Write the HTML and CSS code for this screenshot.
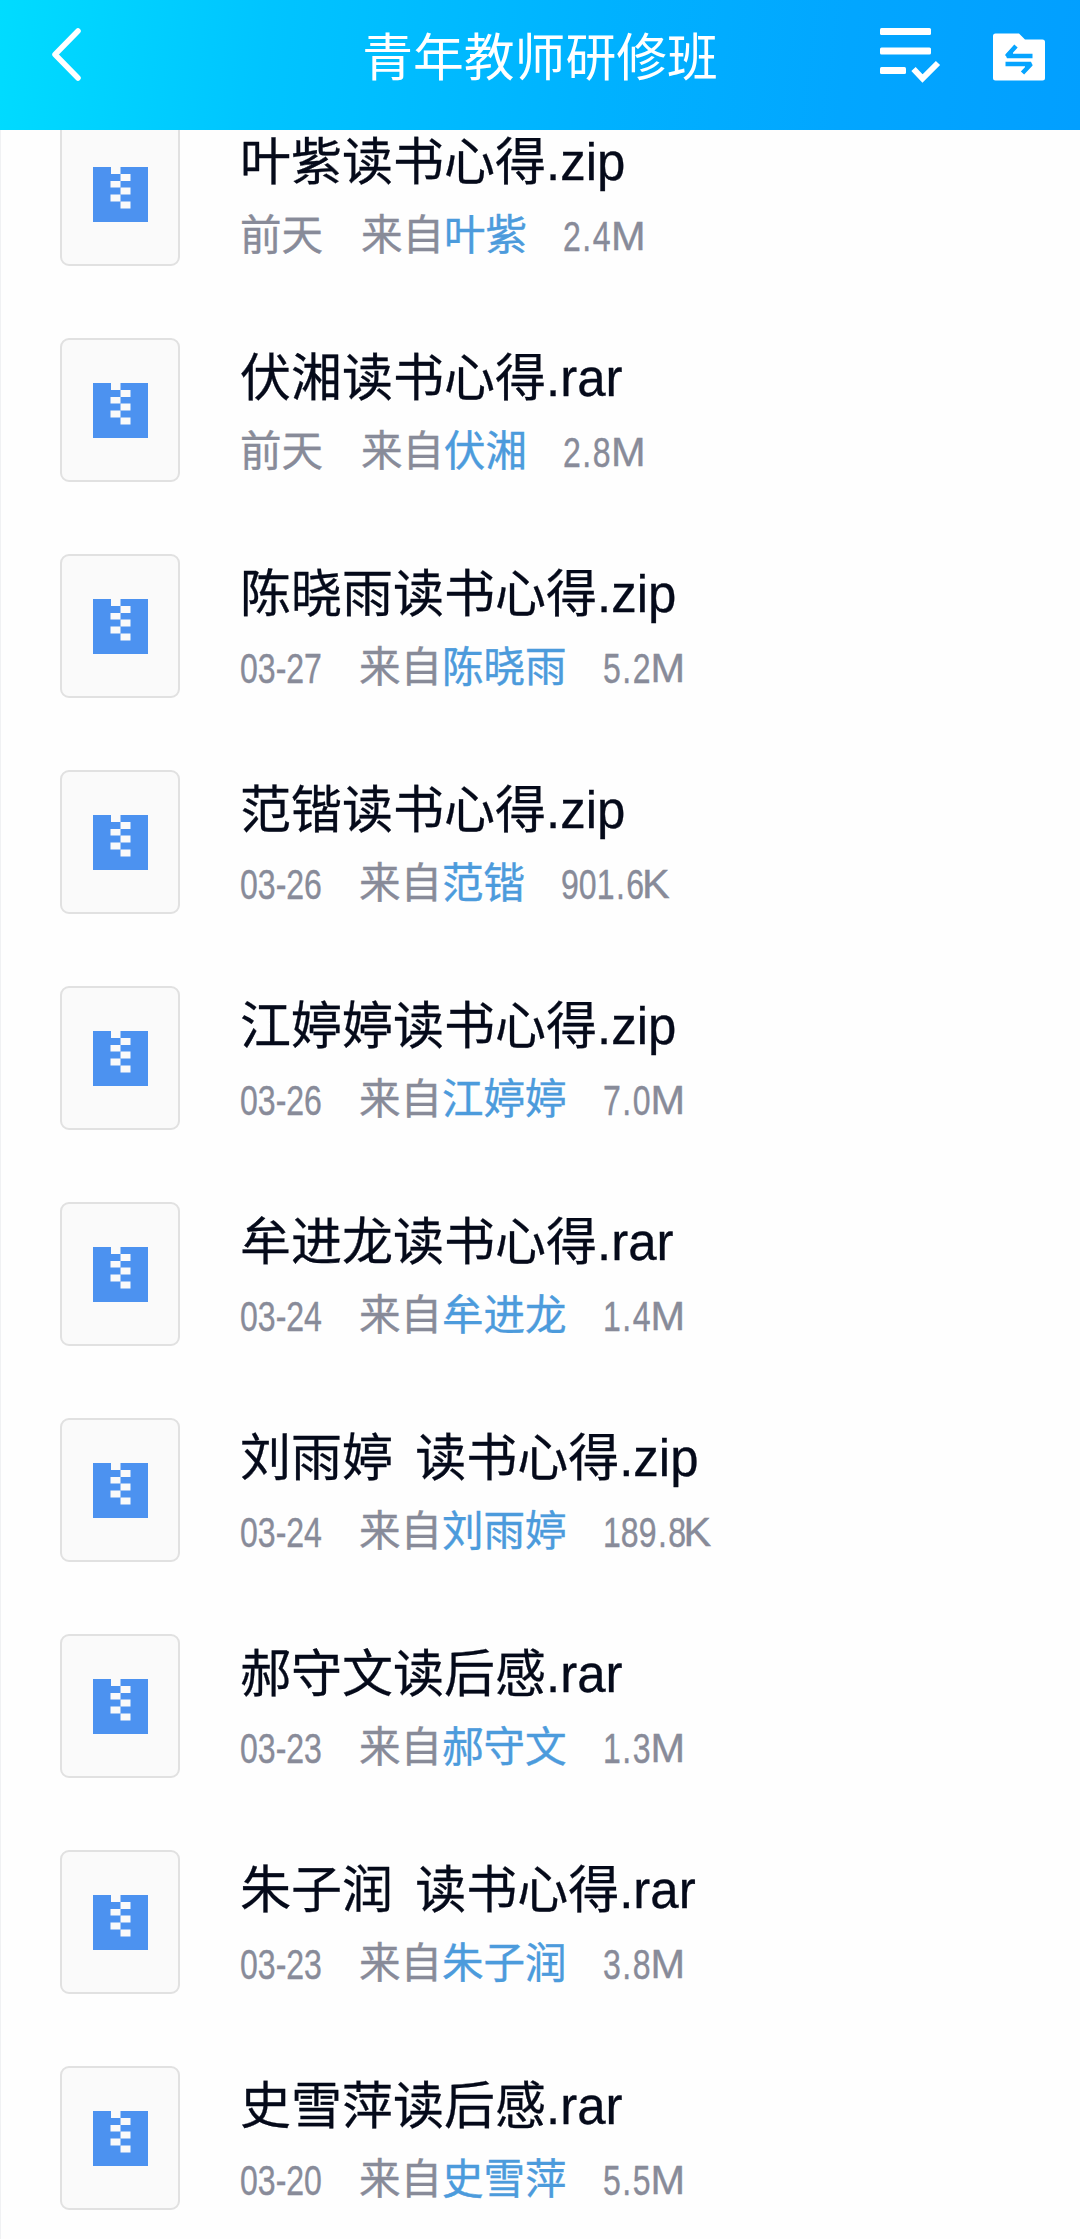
FILE: index.html
```html
<!DOCTYPE html>
<html lang="zh-CN">
<head>
  <meta charset="UTF-8">
  <meta name="viewport" content="width=device-width, initial-scale=1.0">
  <title>青年教师研修班</title>
  <link rel="stylesheet" href="styles.css">
</head>
<body>

  <header class="topbar">
    <svg class="back" width="40" height="60" viewBox="0 0 40 60">
      <path d="M33 7 L10 30.500 L33 54" fill="none" stroke="#fff" stroke-width="5.500" stroke-linecap="round" stroke-linejoin="round"/>
    </svg>
    <h1>青年教师研修班</h1>
    <div class="tools">
      <svg width="62" height="56" viewBox="0 0 62 56">
        <g fill="#fff">
          <rect x="0" y="0" width="51" height="7" rx="1.500"/>
          <rect x="0" y="19.500" width="51" height="7" rx="1.500"/>
          <rect x="0" y="39" width="26" height="7" rx="1.500"/>
        </g>
        <path d="M33.500 41 L42.500 50.500 L58 35" fill="none" stroke="#fff" stroke-width="6"/>
      </svg>
      <svg width="52" height="48" viewBox="0 0 52 48">
        <path d="M2.500 0.500 H26 L32 6.500 H49.500 Q52 6.500 52 9 V45 Q52 47.500 49.500 47.500 H2.500 Q0 47.500 0 45 V3 Q0 0.500 2.500 0.500 Z" fill="#fff"/>
        <path d="M39.500 23 H14 L23 13 M12.500 31 H38 L29.500 40" fill="none" stroke="#06a4ff" stroke-width="4.500" stroke-linejoin="bevel"/>
        <path d="M12 22.500 L20 14 V24 Z M39.500 31 L32 39.500 V30 Z" fill="#06a4ff"/>
      </svg>
    </div>
  </header>

  <main class="files">
    <ul id="lista"></ul>
  </main>

  <script>
    const files = [
      { name: "叶紫读书心得.zip", date: "前天", from: "叶紫", size: "2.4M" },
      { name: "伏湘读书心得.rar", date: "前天", from: "伏湘", size: "2.8M" },
      { name: "陈晓雨读书心得.zip", date: "03-27", from: "陈晓雨", size: "5.2M" },
      { name: "范锴读书心得.zip", date: "03-26", from: "范锴", size: "901.6K" },
      { name: "江婷婷读书心得.zip", date: "03-26", from: "江婷婷", size: "7.0M" },
      { name: "牟进龙读书心得.rar", date: "03-24", from: "牟进龙", size: "1.4M" },
      { name: "刘雨婷 读书心得.zip", date: "03-24", from: "刘雨婷", size: "189.8K" },
      { name: "郝守文读后感.rar", date: "03-23", from: "郝守文", size: "1.3M" },
      { name: "朱子润 读书心得.rar", date: "03-23", from: "朱子润", size: "3.8M" },
      { name: "史雪萍读后感.rar", date: "03-20", from: "史雪萍", size: "5.5M" }
    ];

    const icon = `
      <svg width="55" height="55" viewBox="0 0 55 55">
        <rect width="55" height="55" fill="#4c92f0"/>
        <g fill="#fafafa">
          <rect x="18" y="0" width="9.500" height="7"/>
          <rect x="27.500" y="7" width="10" height="7"/>
          <rect x="17.500" y="14" width="10" height="6.500"/>
          <rect x="27.500" y="20.500" width="10" height="7"/>
          <rect x="17.500" y="27.500" width="10" height="7"/>
          <rect x="27.500" y="34.500" width="10" height="7"/>
        </g>
      </svg>`;

    document.getElementById("lista").innerHTML = files.map(f => {
      const num = f.size.slice(0, -1);
      const today = f.date === "前天";
      return `
        <li class="file">
          <div class="thumb">${icon}</div>
          <div class="info">
            <div class="name">${f.name}</div>
            <div class="meta">
              <span class="date ${today ? "word" : ""}"><span class="${today ? "" : "narrow"}">${f.date}</span></span>
              <span class="cjk">来自<a>${f.from}</a></span>
              <span class="size"><span class="num ${num.length > 3 ? "long" : ""}"><span class="narrow">${num.replace(".", "<i>.</i>")}</span></span>${f.size.slice(-1)}</span>
            </div>
          </div>
        </li>`;
    }).join("");
  </script>

</body>
</html>
```

FILE: styles.css
```css
* {
  box-sizing: border-box;
}

body {
  margin: 0;
  height: 2239px;
  overflow: hidden;
  background-color: #fefefe;
  font-family: "Liberation Sans", "Noto Sans CJK SC", sans-serif;
}

.topbar {
  display: grid;
  grid-template-columns: 1fr auto 1fr;
  align-items: start;
  height: 130px;
  padding: 0 35px 0 45px;
  background: linear-gradient(97deg, #00dcff 0%, #00c4ff 25%, #00b2ff 55%, #02a6ff 78%, #029fff 100%);
}

.back {
  margin-top: 24px;
}

.topbar h1 {
  margin: 0;
  padding-top: 21px;
  color: #fff;
  font-size: 50.800px;
  font-weight: 400;
  line-height: 76px;
  margin-left: -10px;
}

.tools {
  display: flex;
  justify-content: flex-end;
  gap: 51px;
  padding-top: 28px;
}

.tools svg:last-child {
  margin-top: 5px;
}

.files {
  height: 2109px;
  overflow: hidden;
  border-left: 1px solid #f0f1f3;
}

.files ul {
  list-style: none;
  margin: -8px 0 0;
  padding: 0 0 0 59px;
}

.file {
  display: flex;
  height: 216px;
}

.thumb {
  display: flex;
  flex: none;
  align-items: center;
  justify-content: center;
  width: 120px;
  height: 144px;
  background-color: #fafafa;
  border: 2px solid #e1e1e1;
  border-radius: 9px;
}

.info {
  margin-left: 60px;
  white-space: nowrap;
}

.name {
  margin-top: 5px;
  color: #050a1a;
  font-size: 51px;
  line-height: 72px;
  word-spacing: 8px;
  -webkit-text-stroke: 0.3px #050a1a;
}

.meta {
  display: flex;
  color: #888b99;
  font-size: 41.500px;
  line-height: 60px;
  margin-top: 7px;
  -webkit-text-stroke: 0.4px currentColor;
}

.meta a {
  color: #4c9bdc;
}

.date {
  width: 119px;
}

.date.word {
  width: 121px;
}

/* digits are set condensed, letters keep their width */
.narrow {
  display: inline-block;
  font-size: 43px;
  transform: scaleX(0.745);
  transform-origin: left;
}

.narrow i {
  font-style: normal;
  margin: 0 2px;
}

.size {
  display: flex;
  margin-left: 36px;
}

.num {
  width: 48px;
}

.num.long {
  width: 81px;
}
```
